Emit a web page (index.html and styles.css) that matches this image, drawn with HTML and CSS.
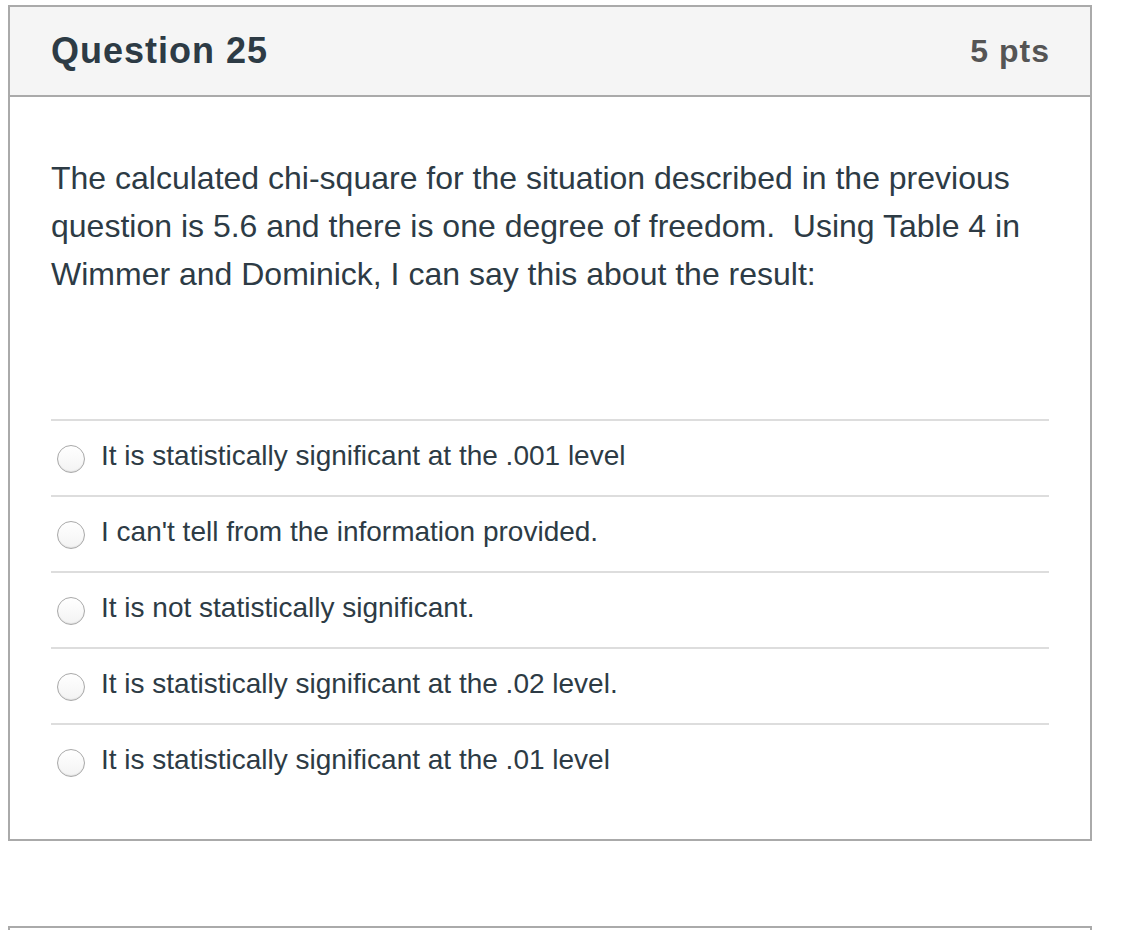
FILE: index.html
```html
<!DOCTYPE html>
<html>
<head>
<meta charset="utf-8">
<link rel="stylesheet" href="styles.css">
</head>
<body>
<div class="question">
  <div class="header">
    <h2 class="title">Question 25</h2>
    <span class="pts">5 pts</span>
  </div>
  <div class="body">
    <p class="text">The calculated chi-square for the situation described in the previous question is 5.6 and there is one degree of freedom.&nbsp; Using Table 4 in Wimmer and Dominick, I can say this about the result:</p>
    <div class="answers">
      <div class="answer"><span class="radio"></span><span class="label">It is statistically significant at the .001 level</span></div>
      <div class="answer"><span class="radio"></span><span class="label">I can't tell from the information provided.</span></div>
      <div class="answer"><span class="radio"></span><span class="label">It is not statistically significant.</span></div>
      <div class="answer"><span class="radio"></span><span class="label">It is statistically significant at the .02 level.</span></div>
      <div class="answer"><span class="radio"></span><span class="label">It is statistically significant at the .01 level</span></div>
    </div>
  </div>
</div>
<div class="question next"></div>
</body>
</html>
```
FILE: styles.css
```css
html, body {
  margin: 0;
  padding: 0;
  background: #fff;
}
body {
  padding: 5px 0 0 8px;
  font-family: "Liberation Sans", Arial, sans-serif;
  color: #2d3b45;
}
.question {
  width: 1080px;
  border: 2px solid #aaaaaa;
}
.header {
  height: 88px;
  background: #f5f5f5;
  border-bottom: 2px solid #aaaaaa;
  display: flex;
  align-items: center;
  justify-content: space-between;
  padding: 0 41px;
}
.title {
  margin: 0;
  font-size: 36px;
  letter-spacing: 1px;
  font-weight: bold;
  color: #2d3b45;
}
.pts {
  font-size: 32px;
  letter-spacing: 1px;
  margin-right: -1px;
  font-weight: bold;
  color: #555555;
}
.body {
  padding: 57px 41px 40px;
}
.text {
  margin: 0;
  font-size: 32px;
  line-height: 48px;
}
.answers {
  margin-top: 121px;
}
.answer {
  height: 76px;
  border-top: 2px solid #dddddd;
  display: flex;
  align-items: center;
  box-sizing: border-box;
}
.radio {
  width: 26px;
  height: 26px;
  border-radius: 50%;
  border: 1px solid #a9a9a9;
  background: linear-gradient(#ffffff, #f3f3f3);
  box-shadow: inset 0 -1px 1px rgba(0,0,0,0.08);
  margin-left: 6px;
  margin-right: 16px;
  margin-top: 2px;
  flex: none;
}
.label {
  font-size: 28px;
  margin-bottom: 4px;
}
.next {
  margin-top: 85px;
  height: 20px;
  border-bottom: none;
}
```
